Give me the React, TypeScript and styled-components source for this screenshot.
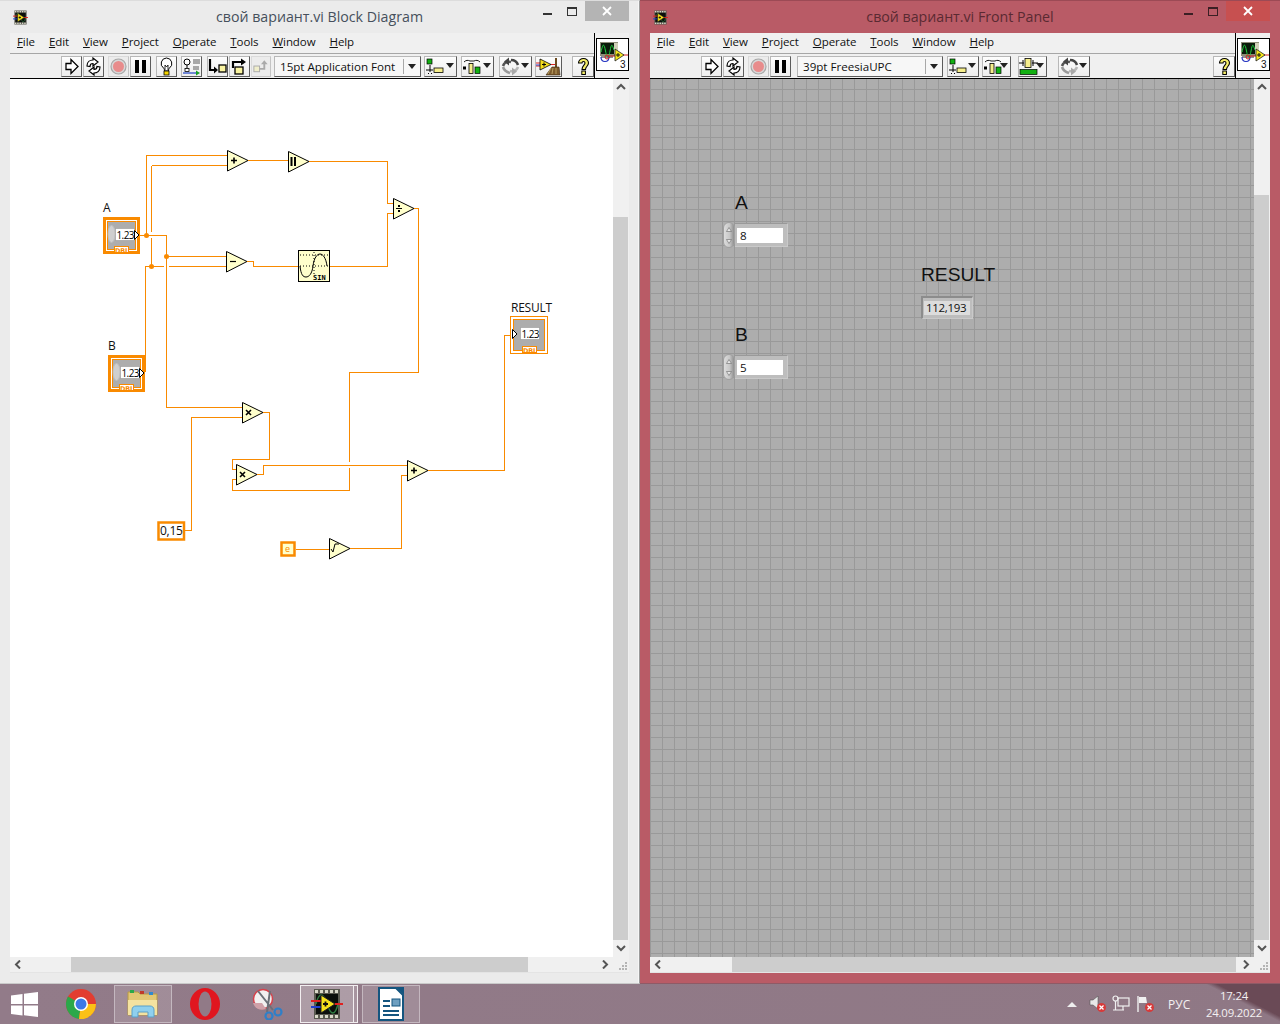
import React from "react";
import styled, { createGlobalStyle, css } from "styled-components";

const GlobalStyle = createGlobalStyle`
  html, body { margin: 0; padding: 0; overflow: hidden; background: #8f7885; }
  * { box-sizing: border-box; }
  #root { width: 1280px; height: 1024px; }
`;

const Desktop = styled.div`
  width: 1280px; height: 1024px; display: flex; flex-direction: column;
  font-family: "Noto Sans", "Open Sans", sans-serif; overflow: hidden;
`;
const WindowsRow = styled.div`display: flex; height: 984px;`;
const Win = styled.section<{ $active?: boolean }>`
  width: 640px; display: flex; flex-direction: column; padding: 0 10px 10px;
  background: ${p => (p.$active ? "#b95b66" : "#ebebeb")};
  border-top: 1px solid ${p => (p.$active ? "#9c4a55" : "#dcdcdc")};
  border-bottom: 1px solid ${p => (p.$active ? "#8f5a66" : "#c9c9c9")};
  ${p => !p.$active && css`border-right: 1px solid #9c9c9c; box-shadow: inset -1px 0 0 #f6f6f6;`}
`;
const TitleBar = styled.header`
  height: 32px; flex: none; display: flex; align-items: flex-start; position: relative;
`;
const TitleIcon = styled.span`position: absolute; left: 3px; top: 7px; display: block; width: 15px; height: 15px;`;
const TitleText = styled.h1<{ $active?: boolean }>`
  margin: 0; width: 100%; text-align: center; font-size: 14.2px; font-weight: 400; line-height: 32px;
  color: ${p => (p.$active ? "#5a2a32" : "#46505c")};
  font-family: "Open Sans", "Noto Sans", sans-serif;
`;
const Caption = styled.div`position: absolute; right: 0; top: 0; display: flex; align-items: flex-start;`;
const CaptionBtn = styled.span`width: 25px; height: 20px; display: flex; align-items: center; justify-content: center;`;
const CloseBtn = styled.span<{ $active?: boolean }>`
  width: 44px; height: 20px; display: flex; align-items: center; justify-content: center;
  background: ${p => (p.$active ? "#c75050" : "#b4b4b4")};
`;

const Client = styled.div`
  flex: 1; min-height: 0; display: flex; flex-direction: column; background: #f0f0f0;
`;
const HeaderArea = styled.div`height: 46px; flex: none; display: flex; border-bottom: 1px solid #000;`;
const HeaderMain = styled.div`flex: 1; display: flex; flex-direction: column; min-width: 0;`;
const MenuBar = styled.nav`
  height: 21px; flex: none; display: flex; align-items: center; gap: 14px; padding: 0 0 2px 7px;
  border-bottom: 1px solid #a6a6a6; font-size: 11.5px; color: #111;
  font-family: "Open Sans", "Noto Sans", sans-serif;
`;
const MenuItem = styled.span`line-height: 16px; white-space: nowrap; letter-spacing: -0.08px;`;
const Toolbar = styled.div`flex: 1; display: flex; align-items: flex-start; padding-top: 2px;`;
const ToolBtn = styled.span<{ $w: number; $ml: number; $flat?: boolean }>`
  flex: none; display: flex; align-items: center; justify-content: center; height: 21px;
  width: ${p => p.$w}px; margin-left: ${p => p.$ml}px;
  background: ${p => (p.$flat ? "#ececec" : "linear-gradient(#fdfdfd, #ededed)")};
  border: 1px solid; border-color: ${p => (p.$flat ? "#dadada #c4c4c4 #c4c4c4 #dadada" : "#b8b8b8 #5c5c5c #5c5c5c #b8b8b8")};
`;
const FontRing = styled.span<{ $w: number; $ml: number }>`
  flex: none; display: flex; align-items: center; height: 21px; width: ${p => p.$w}px; margin-left: ${p => p.$ml}px;
  background: #f7f7f7; border: 1px solid; border-color: #b8b8b8 #5c5c5c #5c5c5c #b8b8b8;
  font-size: 11.6px; color: #111; font-family: "Open Sans", "Noto Sans", sans-serif;
`;
const FontName = styled.span`flex: 1; padding: 0 0 1px 5px; white-space: nowrap; overflow: hidden;`;
const FontCaret = styled.span`
  flex: none; width: 17px; height: 15px; border-left: 1px solid #a8a8a8; display: flex; align-items: center; justify-content: center;
`;
const ConnectorPane = styled.div`
  width: 35px; flex: none; border-left: 1px solid #000; padding: 5px 0 0 1px;
`;
const ConnectorBox = styled.div`width: 33px; height: 33px; background: #fff; border: 1px solid #000; position: relative;`;

const Body = styled.div`flex: 1; min-height: 0; display: flex;`;
const DiagramCanvas = styled.div`flex: 1; min-width: 0; background: #fff; position: relative; overflow: hidden;`;
const GridCanvas = styled.div`
  flex: 1; min-width: 0; position: relative; overflow: hidden;
  background-color: #adadad;
  background-image: linear-gradient(to right, #999 1px, transparent 1px), linear-gradient(to bottom, #999 1px, transparent 1px);
  background-size: 12px 12px; background-position: 0 10px;
`;
const VScroll = styled.div`width: 16px; flex: none; display: flex; flex-direction: column; background: #f0f0f0;`;
const ScrollArrowV = styled.span`height: 17px; flex: none; display: flex; align-items: center; justify-content: center;`;
const VGap = styled.span<{ $h: number }>`height: ${p => p.$h}px; flex: none;`;
const VThumb = styled.span`flex: 1; background: #cdcdcd; margin-right: 1px;`;
const HScrollRow = styled.div`height: 16px; flex: none; display: flex; background: #f0f0f0; border-bottom: 1px solid #e4e4e4;`;
const ScrollArrowH = styled.span`width: 17px; flex: none; display: flex; align-items: center; justify-content: center;`;
const HGap = styled.span<{ $w?: number }>`${p => (p.$w ? `width: ${p.$w}px; flex: none;` : "flex: 1;")}`;
const HThumb = styled.span<{ $w: number }>`width: ${p => p.$w}px; flex: none; background: #cdcdcd;`;
const Grip = styled.span`width: 16px; flex: none; display: flex; align-items: flex-end; justify-content: flex-end; padding: 0 1px 1px 0;`;

/* Front panel: items on a free canvas */
const PanelLabel = styled.span<{ $x: number; $y: number }>`
  position: absolute; left: ${p => p.$x}px; top: ${p => p.$y}px; font-family: "Liberation Sans", sans-serif;
  font-size: 19.2px; line-height: 22px; color: #111; white-space: nowrap;
`;
const Numeric = styled.div<{ $x: number; $y: number }>`
  position: absolute; left: ${p => p.$x}px; top: ${p => p.$y}px; display: flex; align-items: center;
`;
const Spinner = styled.span`
  width: 12px; height: 26px; border-radius: 6px; display: flex; flex-direction: column; align-items: center; justify-content: space-around;
  background: linear-gradient(to right, #dcdcdc, #c8c8c8 55%, #8f8f8f); border: 1px solid #a0a0a0;
`;
const NumFrame = styled.span`
  width: 53px; height: 24px; background: #bdbdbd; padding: 4px 4px 3px 2px; display: flex;
  border-top: 1px solid #999; border-right: 1px solid #c9c9c9; border-bottom: 1px solid #c9c9c9;
`;
const NumField = styled.span`
  flex: 1; background: #fff; font-family: "Open Sans", "Noto Sans", sans-serif; font-size: 11.6px; line-height: 15px; padding-left: 3px; color: #111;
`;
const Indicator = styled.div<{ $x: number; $y: number }>`
  position: absolute; left: ${p => p.$x}px; top: ${p => p.$y}px; width: 52px; height: 23px; background: #bdbdbd; padding: 3px 2px 3px 1px;
  border-left: 2px solid #8c8c8c; border-top: 2px solid #8c8c8c; border-right: 1px solid #c9c9c9; border-bottom: 1px solid #c9c9c9; display: flex;
`;
const IndField = styled.span`
  flex: 1; background: #dcdcdc; font-family: "Open Sans", "Noto Sans", sans-serif; font-size: 11.5px; line-height: 14px; padding-left: 2px; color: #111; letter-spacing: -0.3px; white-space: nowrap;
`;

/* Taskbar */
const Taskbar = styled.footer`
  height: 40px; flex: none; display: flex; align-items: center; gap: 4px; position: relative; color: #fff;
  background:
    linear-gradient(27deg, transparent 583px, #6a4a56 588px),
    linear-gradient(to right, #927b89, #8f7885);
`;
const TaskItem = styled.span<{ $box?: boolean; $open?: boolean; $w?: number }>`
  width: ${p => p.$w ?? 58}px; height: 38px; flex: none; display: flex; align-items: center; justify-content: center;
  ${p => p.$box && css`border: 1px solid rgba(255,255,255,.38); background: rgba(255,255,255,.14);`}
  ${p => p.$open && css`border: 1px solid #f2eef0; background: rgba(255,255,255,.26);`}
`;
const Stack = styled.span`width: 4px; height: 38px; flex: none; border: 1px solid #f2eef0; border-left: 0; margin-left: -4px; background: rgba(255,255,255,.2);`;
const Tray = styled.div`margin-left: auto; display: flex; align-items: center; height: 100%; padding-right: 9px;`;
const TrayCaret = styled.span`display: flex; width: 12px; margin-right: 9px;`;
const TrayIcon = styled.span`display: flex; width: 18px; height: 18px; margin-right: 6px;`;
const Lang = styled.span`font-family: "Open Sans", "Noto Sans", sans-serif; font-size: 12px; margin: 0 7px 0 8px; width: 22px; white-space: nowrap; color: #f4f0f2;`;
const Clock = styled.div`
  width: 74px; text-align: center; font-family: "Open Sans", "Noto Sans", sans-serif; font-size: 11.4px; line-height: 17px; color: #f4f0f2; letter-spacing: -0.2px;
`;

const WIRE = "#f98a00";

/* ---------- icons ---------- */
const ViIcon = ({ size = 15 }: { size?: number }) => (
  <svg width={size} height={size} viewBox="0 0 32 32">
    <rect x="3" y="1" width="26" height="30" fill="#5a5a50" />
    <rect x="5" y="6" width="22" height="20" fill="#0b0f0b" />
    {[4, 9, 14, 19, 24].map(x => <rect key={x} x={x} y="2" width="3" height="3" fill="#d8d8c8" />)}
    {[4, 9, 14, 19, 24].map(x => <rect key={x} x={x} y="27" width="3" height="3" fill="#d8d8c8" />)}
    <path d="M5 16c3-12 7-12 11 0s8 12 11 0" fill="none" stroke="#2f7d42" strokeWidth="1.4" />
    <path d="M0 13h10M22 16h10" stroke="#e02020" strokeWidth="2" />
    <path d="M0 19h10" stroke="#2040d0" strokeWidth="2" />
    <path d="M10 7l14 9-14 9z" fill="#f6e31c" stroke="#222" strokeWidth="1" />
    <path d="M12 16h5M14.5 13.5v5" stroke="#111" strokeWidth="1.8" />
  </svg>
);

const Chev = ({ dir }: { dir: "up" | "down" | "left" | "right" }) => {
  const d = { up: "M1 6l4-4 4 4", down: "M1 2l4 4 4-4", left: "M6 0.5l-4 4 4 4", right: "M3 0.5l4 4-4 4" }[dir];
  return <svg width="10" height="9" viewBox="0 0 10 9"><path d={d} fill="none" stroke="#555" strokeWidth="2" /></svg>;
};
const GripDots = () => (
  <svg width="9" height="9" viewBox="0 0 9 9" fill="#b4b4b4">
    <rect x="6" y="0" width="2" height="2" /><rect x="3" y="3" width="2" height="2" /><rect x="6" y="3" width="2" height="2" />
    <rect x="0" y="6" width="2" height="2" /><rect x="3" y="6" width="2" height="2" /><rect x="6" y="6" width="2" height="2" />
  </svg>
);
const Caret = () => <svg width="8" height="5" viewBox="0 0 8 5"><path d="M0 0h8L4 5z" fill="#222" /></svg>;

const G = ({ children, w = 19 }: { children: React.ReactNode; w?: number }) => (
  <svg width={w} height="19" viewBox={`0 0 ${w} 19`} shapeRendering="geometricPrecision">{children}</svg>
);
const RunI = () => <G><path d="M4 6.500h5V2.500l7 7-7 7v-4H4z" fill="#fff" stroke="#000" strokeWidth="1.3" /></G>;
const LoopI = () => (
  <G>
    <path d="M3 9c0-4 3-6 6-6V1l5 4-5 4V6.500c-2 0-3 1-3 3z" fill="#fff" stroke="#000" strokeWidth="1.2" />
    <path d="M16 10c0 4-3 6-6 6v2l-5-4 5-4v2.500c2 0 3-1 3-3z" fill="#fff" stroke="#000" strokeWidth="1.2" />
  </G>
);
const AbortI = () => (
  <G>
    <circle cx="9.500" cy="9.500" r="7.500" fill="#d8d8d8" stroke="#a8a8a8" strokeWidth="1.2" />
    <circle cx="9.500" cy="9.500" r="5.500" fill="#e88c8c" />
  </G>
);
const PauseI = () => <G><rect x="4" y="3" width="4" height="13" fill="#000" /><rect x="11" y="3" width="4" height="13" fill="#000" /></G>;
const BulbI = () => (
  <G>
    <path d="M9.500 1a5.500 5.500 0 0 0-3 10c1 1 1 2 1 3h4c0-1 0-2 1-3a5.500 5.500 0 0 0-3-10z" fill="#fff" stroke="#000" />
    <path d="M8 13V8l1.500 2L11 8v5" fill="none" stroke="#000" strokeWidth=".8" />
    <rect x="7" y="14" width="5" height="4" fill="#f5d400" stroke="#000" strokeWidth=".8" />
  </G>
);
const RetainI = () => (
  <G>
    <circle cx="5" cy="5" r="3" fill="#fff" stroke="#000" /><path d="M5 8v6" stroke="#000" />
    <rect x="11" y="2" width="7" height="5" fill="#a9a9a9" /><rect x="11" y="9" width="6" height="4" fill="#a9a9a9" />
    <rect x="3" y="11.500" width="4" height="3" fill="#fff" stroke="#000" strokeWidth=".8" />
    <path d="M1 16h13" stroke="#1a3fc0" strokeWidth="1.200" /><path d="M14 13.500l4 2.500-4 2.500z" fill="#18a028" />
  </G>
);
const StepInI = () => (
  <G>
    <path d="M2 2v11h6" fill="none" stroke="#000" strokeWidth="2.200" /><path d="M6 9.500l4 3.500-4 3.500z" fill="#000" />
    <rect x="11" y="8" width="7" height="7" fill="#f9f3a0" stroke="#000" strokeWidth="1.300" />
  </G>
);
const StepOverI = () => (
  <G>
    <path d="M3 11V5h9" fill="none" stroke="#000" strokeWidth="2.200" /><path d="M11 1.500l5 3.500-5 3.500z" fill="#000" />
    <rect x="5" y="10" width="8" height="7" fill="#f9f3a0" stroke="#000" strokeWidth="1.300" />
  </G>
);
const StepOutI = () => (
  <G>
    <rect x="2" y="9" width="6" height="6" fill="#f0eecb" stroke="#aaa" />
    <path d="M8 12h5V6" fill="none" stroke="#aaa" strokeWidth="2" /><path d="M9.500 7l3.500-4 3.500 4z" fill="#aaa" />
  </G>
);
const WithCaret = ({ w, children }: { w: number; children: React.ReactNode }) => (
  <svg width={w} height="19" viewBox={`0 0 ${w} 19`}>
    {children}
    <path d={`M${w - 10} 6h8l-4 5z`} fill="#222" />
  </svg>
);
const AlignI = ({ w }: { w: number }) => (
  <WithCaret w={w}>
    <rect x="2" y="2" width="5" height="5" fill="#12b012" stroke="#000" strokeWidth=".7" />
    <path d="M5 8v7M1 13h7" stroke="#000" /><rect x="9" y="11" width="9" height="4.500" fill="#f6ee8c" stroke="#000" strokeWidth=".8" />
    <path d="M3 16.500h1M6 16.500h1" stroke="#000" />
  </WithCaret>
);
const DistI = ({ w }: { w: number }) => (
  <WithCaret w={w}>
    <path d="M2 5c2-2 4-2 6-1h4c2-1 4-1 6 1" fill="none" stroke="#000" strokeWidth=".9" />
    <rect x="1" y="9.500" width="3" height="3" fill="#000" />
    <rect x="7" y="6.500" width="4" height="10" fill="#f6ee8c" stroke="#000" strokeWidth=".8" />
    <rect x="13" y="10" width="5" height="6.500" fill="#12b012" stroke="#000" strokeWidth=".7" />
  </WithCaret>
);
const ResizeI = ({ w }: { w: number }) => (
  <WithCaret w={w}>
    <path d="M0 6h5M4 3v6M13 6h6M14 3v6" stroke="#000" /><rect x="6" y="1.500" width="6" height="9" fill="#f6ee8c" stroke="#000" strokeWidth=".8" />
    <rect x="1" y="12.500" width="17" height="5" fill="#12b012" stroke="#000" strokeWidth=".7" />
  </WithCaret>
);
const ReorderI = ({ w }: { w: number }) => (
  <WithCaret w={w}>
    <path d="M3 9c1-3 4-5 8-4" fill="none" stroke="#555" strokeWidth="2.600" />
    <path d="M9 0.500L4 4.500l5 4z" fill="#444" />
    <path d="M11 3c3 0 6 2 7 5" fill="none" stroke="#444" strokeWidth="2.600" />
    <path d="M18 10c-1 3-4 5-8 4" fill="none" stroke="#b8b8b8" strokeWidth="2.600" />
    <path d="M12 10.500l5 4-5 4z" fill="#a8a8a8" />
    <path d="M3 10c1 3 3 5 7 6" fill="none" stroke="#999" strokeWidth="2.600" />
  </WithCaret>
);
const CleanI = () => (
  <svg width="25" height="19" viewBox="0 0 25 19">
    <path d="M0 6h6M0 9h6" stroke="#d22" /><path d="M0 8h6" stroke="#2a3fd0" />
    <path d="M4 2l11 5.500-11 5.500z" fill="#f5de1c" stroke="#000" strokeWidth=".8" />
    <path d="M6 7.500h4M8 5.500v4" stroke="#000" /><path d="M15 7.500h4" stroke="#d22" />
    <path d="M20 1v9" stroke="#6a4a20" strokeWidth="2" /><path d="M16 10h7l1 8H10z" fill="#7c5a2c" stroke="#3d2a10" strokeWidth=".6" />
    <path d="M12 17l3-6M16 17l1-6M20 17l0-6" stroke="#c8b070" strokeWidth=".8" />
  </svg>
);
const HelpI = () => (
  <G>
    <path d="M4.500 6c0-6 10-6 10 0 0 3-3 3.500-3 6.500H8c0-4 3-4.500 3-6.500 0-2-3-2-3 0z" fill="#f5ee6a" stroke="#000" strokeWidth="1.100" />
    <rect x="7.800" y="14" width="3.600" height="3.500" fill="#f5ee6a" stroke="#000" strokeWidth="1" />
  </G>
);

const ConnectorIcon = () => (
  <svg width="31" height="31" viewBox="0 0 31 31" style={{ display: "block" }}>
    <rect x="3" y="3" width="18" height="14" fill="#8c8c78" />
    <rect x="4" y="4" width="13" height="11" fill="#0a1a0a" />
    <path d="M4 13c2-9 3-9 4.500-1s3 8 4.500 0 2-7 4-1" fill="none" stroke="#22d040" strokeWidth="1" />
    <rect x="17" y="4" width="4" height="11" fill="#d0d0b8" />
    <path d="M4 18h12" stroke="#222" />
    <path d="M4 18c0 6 8 6 8 0" fill="none" stroke="#2030c0" strokeWidth="1.200" />
    <circle cx="10" cy="18" r="2" fill="none" stroke="#d02020" />
    <path d="M11 17h8M26 16h5" stroke="#d02020" />
    <path d="M18 10l9 6-9 6z" fill="#f5e81c" stroke="#222" strokeWidth=".8" />
    <path d="M19 16h4M21 14v4" stroke="#111" />
    <text x="23" y="29" fontFamily="Liberation Sans, sans-serif" fontSize="10" fill="#111">3</text>
  </svg>
);

const CaptionButtons = ({ active }: { active?: boolean }) => (
  <Caption>
    <CaptionBtn>
      <svg width="10" height="10" viewBox="0 0 10 10"><rect x="0" y="7" width="9" height="2" fill={active ? "#3a1f24" : "#333"} /></svg>
    </CaptionBtn>
    <CaptionBtn>
      <svg width="11" height="10" viewBox="0 0 11 10"><rect x=".5" y="2" width="9" height="7.500" fill="none" stroke={active ? "#3a1f24" : "#333"} /><rect x="0" y="1" width="10" height="2" fill={active ? "#3a1f24" : "#333"} /></svg>
    </CaptionBtn>
    <CloseBtn $active={active}>
      <svg width="10" height="10" viewBox="0 0 10 10"><path d="M1 1l8 8M9 1l-8 8" stroke="#fff" strokeWidth="1.800" /></svg>
    </CloseBtn>
  </Caption>
);

const MENU = ["File", "Edit", "View", "Project", "Operate", "Tools", "Window", "Help"];
const Menu = () => <MenuBar>{MENU.map(m => <MenuItem key={m}><u>{m[0]}</u>{m.slice(1)}</MenuItem>)}</MenuBar>;

/* ---------- block diagram (drawing) ---------- */
const Prim = ({ x, y, glyph }: { x: number; y: number; glyph: React.ReactNode }) => (
  <g transform={`translate(${x} ${y})`}>
    <path d="M.5 .5L21 10.500 .5 21z" fill="#ffffcc" stroke="#000" strokeWidth="1" />
    {glyph}
  </g>
);
const Term = ({ x, y, ctrl }: { x: number; y: number; ctrl?: boolean }) => (
  <g transform={`translate(${x} ${y})`}>
    {ctrl
      ? <rect x="1.500" y="1.500" width="34" height="34" fill="#fff" stroke={WIRE} strokeWidth="3" />
      : <rect x=".5" y=".5" width="37" height="37" fill="#fff" stroke={WIRE} strokeWidth="1" />}
    {ctrl
      ? <rect x="4.500" y="4.500" width="28" height="28" fill="#adadad" stroke={WIRE} strokeWidth="1" />
      : <rect x="3.500" y="3.500" width="31" height="31" fill="#adadad" stroke={WIRE} strokeWidth="1" />}
    {ctrl && <ellipse cx="8.500" cy="17" rx="3.500" ry="8.500" fill="#cfcfcf" stroke="#c0c0c0" />}
    <rect x={ctrl ? 12.500 : 10.500} y="11.500" width="19" height="12" fill="#fff" stroke="#8a8a8a" strokeDasharray="1 1" />
    <text x={ctrl ? 13.500 : 11.500} y="21.500" fontFamily="Open Sans, sans-serif" fontSize="10" letterSpacing="-.6" fill="#000">1.23</text>
    {ctrl
      ? <path d="M31.500 13.500L36 18l-4.500 4.500z" fill="#fff" stroke="#000" />
      : <path d="M2.500 13.500L7 18l-4.500 4.500z" fill="#fff" stroke="#000" />}
    <rect x={ctrl ? 11.500 : 12.500} y={ctrl ? 29.500 : 30.500} width="14" height={ctrl ? 6 : 6} fill="#fff" stroke={WIRE} />
    <text x={ctrl ? 12 : 13} y={ctrl ? 35.5 : 36.5} fontFamily="DejaVu Sans, sans-serif" fontWeight="700" fontSize="6.500" letterSpacing="-.2" fill={WIRE}>DBL</text>
  </g>
);
const DiagLabel = styled.text`font-family: "Open Sans", "Noto Sans", sans-serif; font-size: 12px; fill: #111; letter-spacing: -0.25px;`;

const BlockDiagram = () => (
  <svg width="604" height="879" viewBox="10 79 604 879" style={{ display: "block" }}>
    <g fill="none" stroke={WIRE} strokeWidth="1" shapeRendering="crispEdges">
      <path d="M139 235.500H166.500V407.500H242" />
      <path d="M146.500 235V155.500H227" />
      <path d="M151.500 165.500H227M151.500 165.500V232M151.500 238V266" />
      <path d="M145.500 372V266.500H164M169 266.500H226" />
      <path d="M166.500 256.500H226" />
      <path d="M247 261.500H253.500V266.500H298" />
      <path d="M248 160.500H288" />
      <path d="M309 161.500H387.500V203.500H393" />
      <path d="M330 266.500H387.500V213.500H393" />
      <path d="M414 208.500H418.500V372.500H349.500V462M349.500 468V490.500H232.500V479.500H237" />
      <path d="M263 412.500H269.500V459.500H232.500V469.500H237" />
      <path d="M185 530.500H191.500V417.500H242" />
      <path d="M257 474.500H263.500V465.500H407" />
      <path d="M428 470.500H504.500V335.500H512" />
      <path d="M296 549.500H329" />
      <path d="M350 548.500H401.500V475.500H407" />
    </g>
    <g fill={WIRE}>
      <circle cx="146.500" cy="235.500" r="2.500" />
      <circle cx="166.500" cy="256.500" r="2.500" />
      <circle cx="151.500" cy="266.500" r="2.500" />
    </g>
    <Prim x={227} y={150} glyph={<path d="M4 10.500h6M7 7.500v6" stroke="#000" strokeWidth="1.600" />} />
    <Prim x={288} y={151} glyph={<path d="M3.500 6v9M7 6v9" stroke="#000" strokeWidth="2" />} />
    <Prim x={393} y={198} glyph={<g><path d="M3 10.500h6" stroke="#000" /><rect x="5" y="7" width="2" height="2" /><rect x="5" y="12" width="2" height="2" /></g>} />
    <Prim x={226} y={251} glyph={<path d="M4 10.500h6" stroke="#000" strokeWidth="1.200" />} />
    <Prim x={242} y={402} glyph={<path d="M4 8l5 5M9 8l-5 5" stroke="#000" strokeWidth="1.600" />} />
    <Prim x={236} y={464} glyph={<path d="M4 8l5 5M9 8l-5 5" stroke="#000" strokeWidth="1.600" />} />
    <Prim x={407} y={460} glyph={<path d="M4 10.500h6M7 7.500v6" stroke="#000" strokeWidth="1.600" />} />
    <Prim x={329} y={538} glyph={<path d="M2 11l2 3 2-8h4" fill="none" stroke="#000" />} />

    <g transform="translate(298 250)">
      <rect x=".5" y=".5" width="31" height="31" fill="#ffffcc" stroke="#000" />
      <path d="M2 5h28M16 2v22" stroke="#000" strokeDasharray="1 2" />
      <path d="M2 16h28" stroke="#000" strokeDasharray="1 2" />
      <path d="M2 16c1 9 3 11 6 11s6-3 7-11 4-12 7-12 6 4 7 12" fill="none" stroke="#000" />
      <text x="15" y="30" fontFamily="DejaVu Sans Mono, monospace" fontWeight="700" fontSize="7" fill="#000">SIN</text>
    </g>

    <DiagLabel x="103" y="212">A</DiagLabel>
    <DiagLabel x="108" y="350">B</DiagLabel>
    <DiagLabel x="511" y="312">RESULT</DiagLabel>
    <Term x={103} y={217} ctrl />
    <Term x={108} y={355} ctrl />
    <Term x={510} y={316} />

    <rect x="158.500" y="522.500" width="25.500" height="17" fill="#fff" stroke={WIRE} strokeWidth="2.500" />
    <DiagLabel x="160" y="535">0,15</DiagLabel>
    <rect x="281.500" y="542.500" width="13" height="13" fill="#ffffcc" stroke={WIRE} strokeWidth="2.500" />
    <text x="285" y="552" fontFamily="Open Sans, sans-serif" fontSize="9" fill={WIRE}>e</text>
  </svg>
);

/* ---------- taskbar icons ---------- */
const StartLogo = () => (
  <svg width="27" height="27" viewBox="0 0 27 27" fill="#fff">
    <path d="M0 4.500L11.500 3v10H0zM13 2.800L27 1v12H13zM0 14.500h11.500v10L0 23zM13 14.500h14V26l-14-1.800z" />
  </svg>
);
const ChromeLogo = () => (
  <svg width="30" height="30" viewBox="0 0 30 30">
    <circle cx="15" cy="15" r="15" fill="#e23d30" />
    <path d="M15 15L2 7.500A15 15 0 0 0 13 29.900z" fill="#2ba84a" />
    <path d="M15 15h15A15 15 0 0 1 13 29.900z" fill="#fbc116" />
    <circle cx="15" cy="15" r="7" fill="#fff" /><circle cx="15" cy="15" r="5.500" fill="#3b78e7" />
  </svg>
);
const FolderIcon = () => (
  <svg width="32" height="30" viewBox="0 0 32 30">
    <path d="M1 3h10l2 2h17v21H1z" fill="#e2c774" stroke="#b79a45" />
    <rect x="3" y="1" width="4" height="3" fill="#2ba84a" /><rect x="13" y="2" width="4" height="3" fill="#c03a2a" /><rect x="22" y="3" width="4" height="3" fill="#2f8ad0" />
    <path d="M1 11h29v15H1z" fill="#f4e2a0" />
    <path d="M5 28v-7c0-3 2-4 4-4h14c2 0 4 1 4 4v7h-6v-5H11v5z" fill="#8fd0ee" stroke="#5aa0c8" />
  </svg>
);
const OperaLogo = () => (
  <svg width="30" height="32" viewBox="0 0 30 32">
    <ellipse cx="15" cy="16" rx="15" ry="16" fill="#e0161f" />
    <ellipse cx="15" cy="16" rx="6.500" ry="12.500" fill="#917a87" />
  </svg>
);
const ScissorsIcon = () => (
  <svg width="32" height="32" viewBox="0 0 32 32">
    <circle cx="12" cy="11" r="9.500" fill="#f2f0f0" stroke="#d8404a" strokeWidth="1.500" />
    <path d="M2 15c2 6 8 8 13 6l-4-6z" fill="#cfa0a8" />
    <path d="M7 3l15 19M19 3L16 24" stroke="#6c7078" strokeWidth="2" />
    <circle cx="27" cy="24" r="3.500" fill="none" stroke="#2f7fc8" strokeWidth="2.200" />
    <circle cx="18" cy="28" r="3.500" fill="none" stroke="#2f7fc8" strokeWidth="2.200" />
  </svg>
);
const DocIcon = () => (
  <svg width="26" height="34" viewBox="0 0 26 34">
    <path d="M1 1h17l7 7v25H1z" fill="#fff" stroke="#14557f" strokeWidth="2" />
    <path d="M18 0h8v8z" fill="#14557f" />
    <rect x="5" y="13" width="7" height="2" fill="#14557f" /><rect x="5" y="18" width="7" height="2" fill="#14557f" />
    <rect x="5" y="23" width="16" height="2" fill="#14557f" /><rect x="5" y="27" width="16" height="2" fill="#14557f" />
    <rect x="14" y="12" width="8" height="7" fill="#6e9fc0" stroke="#14557f" />
  </svg>
);
const XBadge = ({ x, y }: { x: number; y: number }) => (
  <g transform={`translate(${x} ${y})`}>
    <circle cx="4.500" cy="4.500" r="4.500" fill="#d83a3a" /><path d="M2.500 2.500l4 4M6.500 2.500l-4 4" stroke="#fff" strokeWidth="1.300" />
  </g>
);
const SpeakerI = () => (
  <svg width="18" height="18" viewBox="0 0 18 18">
    <path d="M2 5h3l5-4v13l-5-4H2z" fill="#e8e8e8" stroke="#555" strokeWidth=".6" /><XBadge x={9} y={8} />
  </svg>
);
const NetI = () => (
  <svg width="18" height="18" viewBox="0 0 18 18" fill="none" stroke="#f0f0f0" strokeWidth="1.200">
    <rect x="6" y="3" width="11" height="8" /><circle cx="3.500" cy="3.500" r="2.500" /><path d="M3.500 6v9M1 15h11M11 11v4" />
  </svg>
);
const FlagI = () => (
  <svg width="18" height="18" viewBox="0 0 18 18">
    <path d="M2 1v16" stroke="#f0f0f0" strokeWidth="1.400" /><path d="M3 2h7l1 6H3z" fill="#f0f0f0" /><XBadge x={9} y={8} />
  </svg>
);

const Spin = () => (
  <Spinner>
    <svg width="6" height="5" viewBox="0 0 6 5"><path d="M3 .5l2.500 4H.5z" fill="#e8e8e8" stroke="#777" strokeWidth=".7" /></svg>
    <svg width="6" height="5" viewBox="0 0 6 5"><path d="M3 4.500L.5 .5h5z" fill="#e8e8e8" stroke="#777" strokeWidth=".7" /></svg>
  </Spinner>
);

export default function App() {
  return (
    <Desktop>
      <GlobalStyle />
      <WindowsRow>
        <Win>
          <TitleBar>
            <TitleIcon><ViIcon /></TitleIcon>
            <TitleText>свой вариант.vi Block Diagram</TitleText>
            <CaptionButtons />
          </TitleBar>
          <Client>
            <HeaderArea>
              <HeaderMain>
                <Menu />
                <Toolbar>
                  <ToolBtn $w={21} $ml={51}><RunI /></ToolBtn>
                  <ToolBtn $w={21} $ml={1}><LoopI /></ToolBtn>
                  <ToolBtn $w={21} $ml={4} $flat><AbortI /></ToolBtn>
                  <ToolBtn $w={21} $ml={1}><PauseI /></ToolBtn>
                  <ToolBtn $w={21} $ml={5}><BulbI /></ToolBtn>
                  <ToolBtn $w={21} $ml={4}><RetainI /></ToolBtn>
                  <ToolBtn $w={21} $ml={5}><StepInI /></ToolBtn>
                  <ToolBtn $w={21} $ml={1}><StepOverI /></ToolBtn>
                  <ToolBtn $w={20} $ml={1} $flat><StepOutI /></ToolBtn>
                  <FontRing $w={147} $ml={3}><FontName>15pt Application Font</FontName><FontCaret><Caret /></FontCaret></FontRing>
                  <ToolBtn $w={33} $ml={3}><AlignI w={31} /></ToolBtn>
                  <ToolBtn $w={33} $ml={4}><DistI w={31} /></ToolBtn>
                  <ToolBtn $w={33} $ml={5}><ReorderI w={31} /></ToolBtn>
                  <ToolBtn $w={27} $ml={3}><CleanI /></ToolBtn>
                  <ToolBtn $w={22} $ml={10}><HelpI /></ToolBtn>
                </Toolbar>
              </HeaderMain>
              <ConnectorPane><ConnectorBox><ConnectorIcon /></ConnectorBox></ConnectorPane>
            </HeaderArea>
            <Body>
              <DiagramCanvas><BlockDiagram /></DiagramCanvas>
              <VScroll>
                <ScrollArrowV><Chev dir="up" /></ScrollArrowV>
                <VGap $h={121} />
                <VThumb />
                <ScrollArrowV><Chev dir="down" /></ScrollArrowV>
              </VScroll>
            </Body>
            <HScrollRow>
              <ScrollArrowH><Chev dir="left" /></ScrollArrowH>
              <HGap $w={44} />
              <HThumb $w={457} />
              <HGap />
              <ScrollArrowH><Chev dir="right" /></ScrollArrowH>
              <Grip><GripDots /></Grip>
            </HScrollRow>
          </Client>
        </Win>

        <Win $active>
          <TitleBar>
            <TitleIcon><ViIcon /></TitleIcon>
            <TitleText $active>свой вариант.vi Front Panel</TitleText>
            <CaptionButtons active />
          </TitleBar>
          <Client>
            <HeaderArea>
              <HeaderMain>
                <Menu />
                <Toolbar>
                  <ToolBtn $w={21} $ml={51}><RunI /></ToolBtn>
                  <ToolBtn $w={21} $ml={1}><LoopI /></ToolBtn>
                  <ToolBtn $w={21} $ml={4} $flat><AbortI /></ToolBtn>
                  <ToolBtn $w={21} $ml={1}><PauseI /></ToolBtn>
                  <FontRing $w={146} $ml={6}><FontName>39pt FreesiaUPC</FontName><FontCaret><Caret /></FontCaret></FontRing>
                  <ToolBtn $w={32} $ml={4}><AlignI w={30} /></ToolBtn>
                  <ToolBtn $w={29} $ml={3}><DistI w={27} /></ToolBtn>
                  <ToolBtn $w={29} $ml={7}><ResizeI w={27} /></ToolBtn>
                  <ToolBtn $w={32} $ml={11}><ReorderI w={30} /></ToolBtn>
                  <ToolBtn $w={22} $ml={123}><HelpI /></ToolBtn>
                </Toolbar>
              </HeaderMain>
              <ConnectorPane><ConnectorBox><ConnectorIcon /></ConnectorBox></ConnectorPane>
            </HeaderArea>
            <Body>
              <GridCanvas>
                <PanelLabel $x={85} $y={113}>A</PanelLabel>
                <Numeric $x={73} $y={143}><Spin /><NumFrame><NumField>8</NumField></NumFrame></Numeric>
                <PanelLabel $x={85} $y={245}>B</PanelLabel>
                <Numeric $x={73} $y={275}><Spin /><NumFrame><NumField>5</NumField></NumFrame></Numeric>
                <PanelLabel $x={271} $y={185}>RESULT</PanelLabel>
                <Indicator $x={271} $y={217}><IndField>112,193</IndField></Indicator>
              </GridCanvas>
              <VScroll>
                <ScrollArrowV><Chev dir="up" /></ScrollArrowV>
                <VGap $h={99} />
                <VThumb />
                <ScrollArrowV><Chev dir="down" /></ScrollArrowV>
              </VScroll>
            </Body>
            <HScrollRow>
              <ScrollArrowH><Chev dir="left" /></ScrollArrowH>
              <HGap $w={65} />
              <HThumb $w={504} />
              <HGap />
              <ScrollArrowH><Chev dir="right" /></ScrollArrowH>
              <Grip><GripDots /></Grip>
            </HScrollRow>
          </Client>
        </Win>
      </WindowsRow>

      <Taskbar>
        <TaskItem $w={48}><StartLogo /></TaskItem>
        <TaskItem><ChromeLogo /></TaskItem>
        <TaskItem $box><FolderIcon /></TaskItem>
        <TaskItem><OperaLogo /></TaskItem>
        <TaskItem><ScissorsIcon /></TaskItem>
        <TaskItem $open $w={54}><ViIcon size={32} /></TaskItem>
        <Stack />
        <TaskItem $box><DocIcon /></TaskItem>
        <Tray>
          <TrayCaret><svg width="10" height="5" viewBox="0 0 10 5"><path d="M0 5l5-5 5 5z" fill="#eee" /></svg></TrayCaret>
          <TrayIcon><SpeakerI /></TrayIcon>
          <TrayIcon><NetI /></TrayIcon>
          <TrayIcon><FlagI /></TrayIcon>
          <Lang>РУС</Lang>
          <Clock><div>17:24</div><div>24.09.2022</div></Clock>
        </Tray>
      </Taskbar>
    </Desktop>
  );
}
